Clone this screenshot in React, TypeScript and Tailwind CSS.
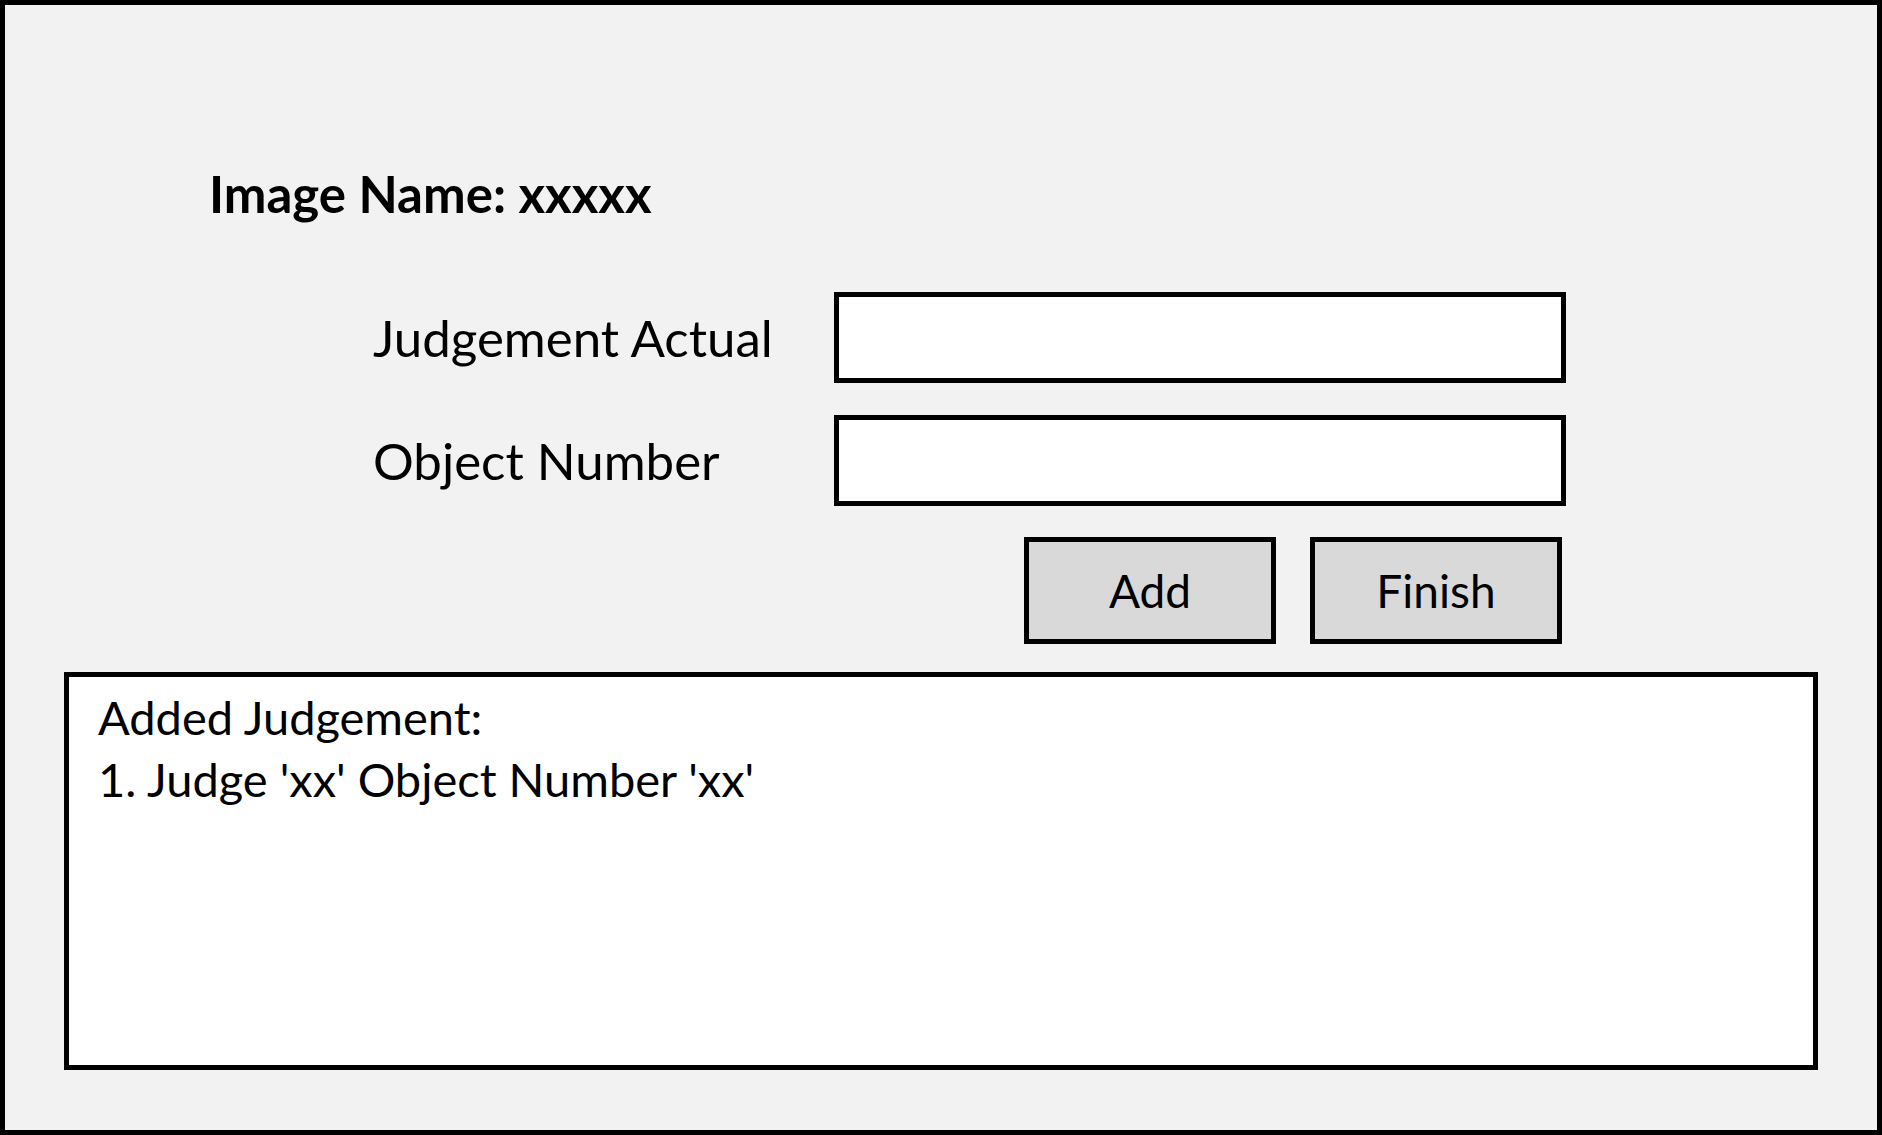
import { useState } from 'react';

const font = { fontFamily: 'Lato, "Open Sans", sans-serif' };

export default function App() {
  const [judgement, setJudgement] = useState('');
  const [objectNumber, setObjectNumber] = useState('');

  return (
    <div
      style={font}
      className="w-[1882px] h-[1135px] border-[5px] border-black bg-[#f2f2f2] text-black flex flex-col overflow-hidden"
    >
      {/* Title */}
      <h1 className="mt-[159px] pl-[204px] h-[60px] leading-[60px] text-[51px] font-bold">
        Image Name: xxxxx
      </h1>

      {/* Form */}
      <div className="mt-[68px] pl-[368px] grid grid-cols-[461px_732px] gap-y-[32px]">
        <label className="h-[91px] leading-[91px] text-[51px] pb-[4px]">Judgement Actual</label>
        <input
          value={judgement}
          onChange={(e) => setJudgement(e.target.value)}
          className="h-[91px] w-[732px] bg-white border-[5px] border-black px-4 text-[40px] outline-none"
        />
        <label className="h-[91px] leading-[91px] text-[51px] pb-[4px]">Object Number</label>
        <input
          value={objectNumber}
          onChange={(e) => setObjectNumber(e.target.value)}
          className="h-[91px] w-[732px] bg-white border-[5px] border-black px-4 text-[40px] outline-none"
        />
      </div>

      {/* Buttons */}
      <div className="mt-[31px] pl-[1019px] flex gap-[34px]">
        <button className="w-[252px] h-[107px] bg-[#d9d9d9] border-[5px] border-black text-[46px] leading-none">
          Add
        </button>
        <button className="w-[252px] h-[107px] bg-[#d9d9d9] border-[5px] border-black text-[46px] leading-none">
          Finish
        </button>
      </div>

      {/* Added list */}
      <div className="mt-[28px] ml-[59px] w-[1754px] h-[398px] bg-white border-[5px] border-black pt-[9px] pl-[29px] text-[47px] leading-[62px]">
        <p>Added Judgement:</p>
        <p>1. Judge 'xx' Object Number 'xx'</p>
      </div>
    </div>
  );
}
